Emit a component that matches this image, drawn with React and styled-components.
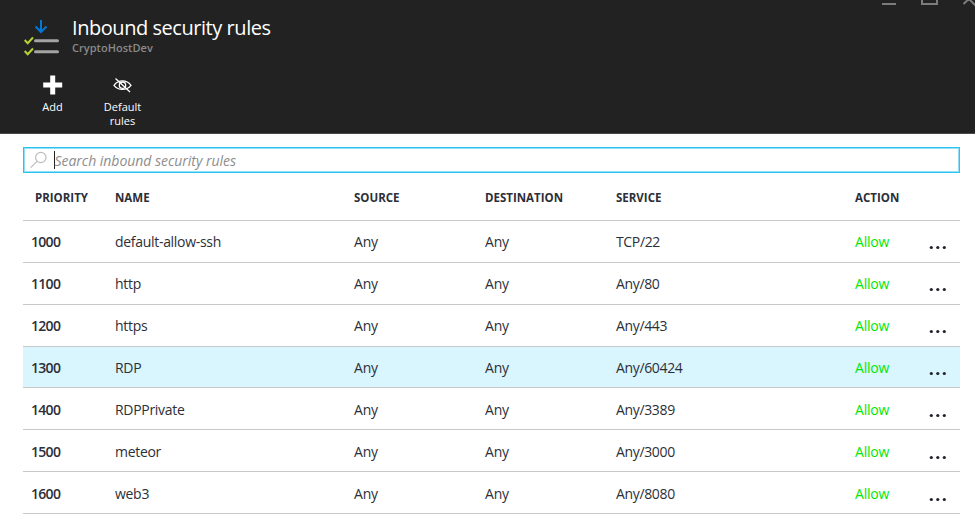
import React from "react";
import styled, { createGlobalStyle } from "styled-components";

const Global = createGlobalStyle`
  * { box-sizing: border-box; }
  body { margin: 0; background: #fff; overflow: hidden; }
`;

const Blade = styled.main`
  width: 975px;
  height: 527px;
  overflow: hidden;
  background: #fff;
  color: #2c2f38;
  font: 14px/20px "Open Sans", "Noto Sans", sans-serif;
`;

const Header = styled.header`
  position: relative;
  height: 134px;
  padding: 15px 24px 0;
  background: #222;
  color: #fff;
  border-bottom: 1px solid #4a4a4a;
`;

const WindowControls = styled.svg`
  position: absolute;
  top: 0;
  right: 0;
  display: block;
`;

const Heading = styled.div`
  display: flex;
  height: 60px;
`;

const RulesIcon = styled.svg`
  width: 36px;
  height: 37px;
  margin: 4px 12px 0 0;
`;

const Title = styled.h1`
  margin: 0;
  font-size: 20px;
  font-weight: 400;
  line-height: 25px;
  letter-spacing: -0.45px;
`;

const Subtitle = styled.div`
  color: #8a8a8a;
  font-size: 11px;
  font-weight: 600;
  line-height: 16px;
  letter-spacing: 0.03px;
`;

const Toolbar = styled.div`
  display: flex;
  margin-left: -6px;
`;

const Command = styled.button`
  display: flex;
  flex-direction: column;
  align-items: center;
  width: 69px;
  margin-right: 1px;
  padding: 0;
  border: 0;
  background: none;
  color: #fff;
  font: 11px/14px "Open Sans", "Noto Sans", sans-serif;
  svg { display: block; height: 20px; margin-bottom: 5px; }
`;

const Body = styled.section`
  padding: 13px 15px 0 23px;
`;

const SearchBox = styled.label`
  display: flex;
  align-items: center;
  height: 26px;
  padding-left: 6px;
  border: 1px solid #2cc4ee;
  box-shadow: inset 0 0 0 1px #8fe0f8;
`;

const Caret = styled.span`
  width: 1px;
  height: 18px;
  margin-left: 7px;
  background: #222;
`;

const Placeholder = styled.span`
  margin-left: -0.5px;
  padding-top: 1px;
  color: #8d8d8d;
  font-size: 14px;
  font-style: italic;
  letter-spacing: -0.03px;
`;

const Row = styled.div`
  display: grid;
  grid-template-columns: 92px 239px 131px 131px 239px 70px 1fr;
  align-items: center;
  height: 41.86px;
  border-bottom: 1px solid #c8c8c8;
  background: ${(p) => (p.$selected ? "#d9f5fe" : "transparent")};
`;

const HeadRow = styled(Row)`
  height: 48px;
  padding-top: 2px;
  font-size: 11.5px;
  font-weight: 700;
`;

const HeadCell = styled.span`
  padding-left: ${(p) => p.$inset || 0}px;
`;

const Cell = styled.span`
  padding-top: 2px;
  letter-spacing: ${(p) => p.$track || 0}px;
`;

const Priority = styled(Cell)`
  padding-left: 8px;
  font-weight: 600;
  letter-spacing: -0.7px;
`;

const Action = styled(Cell)`
  color: #00e800;
  letter-spacing: -0.2px;
`;

const More = styled.svg`
  width: 18px;
  height: 5px;
  margin: 13px 0 0 4px;
`;

const rules = [
  ["1000", "default-allow-ssh", "TCP/22"],
  ["1100", "http", "Any/80"],
  ["1200", "https", "Any/443"],
  ["1300", "RDP", "Any/60424"],
  ["1400", "RDPPrivate", "Any/3389"],
  ["1500", "meteor", "Any/3000"],
  ["1600", "web3", "Any/8080"],
];

export default function App() {
  return (
    <Blade>
      <Global />
      <Header>
        <WindowControls width="95" height="8" fill="none" stroke="#7c7c7c">
          <path d="M2 4H16" strokeWidth="2" />
          <path d="M42 -4V4H57V-4" strokeWidth="2" />
          <path d="M83.500 4L95 -7M88 -2L97 7" strokeWidth="2" />
        </WindowControls>
        <Heading>
          <RulesIcon viewBox="0 0 36 37" fill="none">
            <path d="M17 1V13M11.500 7.500L17 13L22.500 7.500" stroke="#0078d4" strokeWidth="2" />
            <path d="M11.500 21.700H33.500M11.500 32.700H33.500" stroke="#a4a4a4" strokeWidth="3" strokeLinecap="round" />
            <path d="M0.700 21L3.700 24.200L9 18.500M0.700 32L3.700 35.200L9 29.500" stroke="#b8d432" strokeWidth="2" />
          </RulesIcon>
          <div>
            <Title>Inbound security rules</Title>
            <Subtitle>CryptoHostDev</Subtitle>
          </div>
        </Heading>
        <Toolbar>
          <Command>
            <svg width="20" height="20" viewBox="0 0 20 20">
              <path d="M9.700 0.500V19.500M0.200 10H19.200" stroke="#fff" strokeWidth="5" />
            </svg>
            Add
          </Command>
          <Command>
            <svg width="20" height="20" viewBox="0 0 20 20" fill="none" stroke="#fff" strokeWidth="1.300">
              <path d="M1 10.300C5.500 4.500 13.500 4.500 18 10.300C13.500 15.800 5.500 15.800 1 10.300Z" />
              <circle cx="9.500" cy="10.200" r="3.200" />
              <path d="M2.500 3.500L17 17" />
            </svg>
            Default<br />rules
          </Command>
        </Toolbar>
      </Header>
      <Body>
        <SearchBox>
          <svg width="17" height="18" viewBox="0 0 17 18" fill="none" stroke="#bdbdbd" strokeWidth="1.200">
            <circle cx="10.800" cy="6.500" r="5.200" />
            <path d="M7 10.300L0.700 16.700" />
          </svg>
          <Caret />
          <Placeholder>Search inbound security rules</Placeholder>
        </SearchBox>
        <HeadRow>
          <HeadCell $inset={12}>PRIORITY</HeadCell>
          <HeadCell>NAME</HeadCell>
          <HeadCell>SOURCE</HeadCell>
          <HeadCell>DESTINATION</HeadCell>
          <HeadCell>SERVICE</HeadCell>
          <HeadCell>ACTION</HeadCell>
        </HeadRow>
        {rules.map(([priority, name, service]) => (
          <Row key={priority} $selected={priority === "1300"}>
            <Priority>{priority}</Priority>
            <Cell $track={-0.3}>{name}</Cell>
            <Cell $track={-0.2}>Any</Cell>
            <Cell $track={-0.2}>Any</Cell>
            <Cell $track={-0.35}>{service}</Cell>
            <Action>Allow</Action>
            <More viewBox="0 0 18 5" fill="#20232c">
              <circle cx="2.300" cy="2.500" r="1.600" />
              <circle cx="8.800" cy="2.500" r="1.600" />
              <circle cx="15.300" cy="2.500" r="1.600" />
            </More>
          </Row>
        ))}
      </Body>
    </Blade>
  );
}
